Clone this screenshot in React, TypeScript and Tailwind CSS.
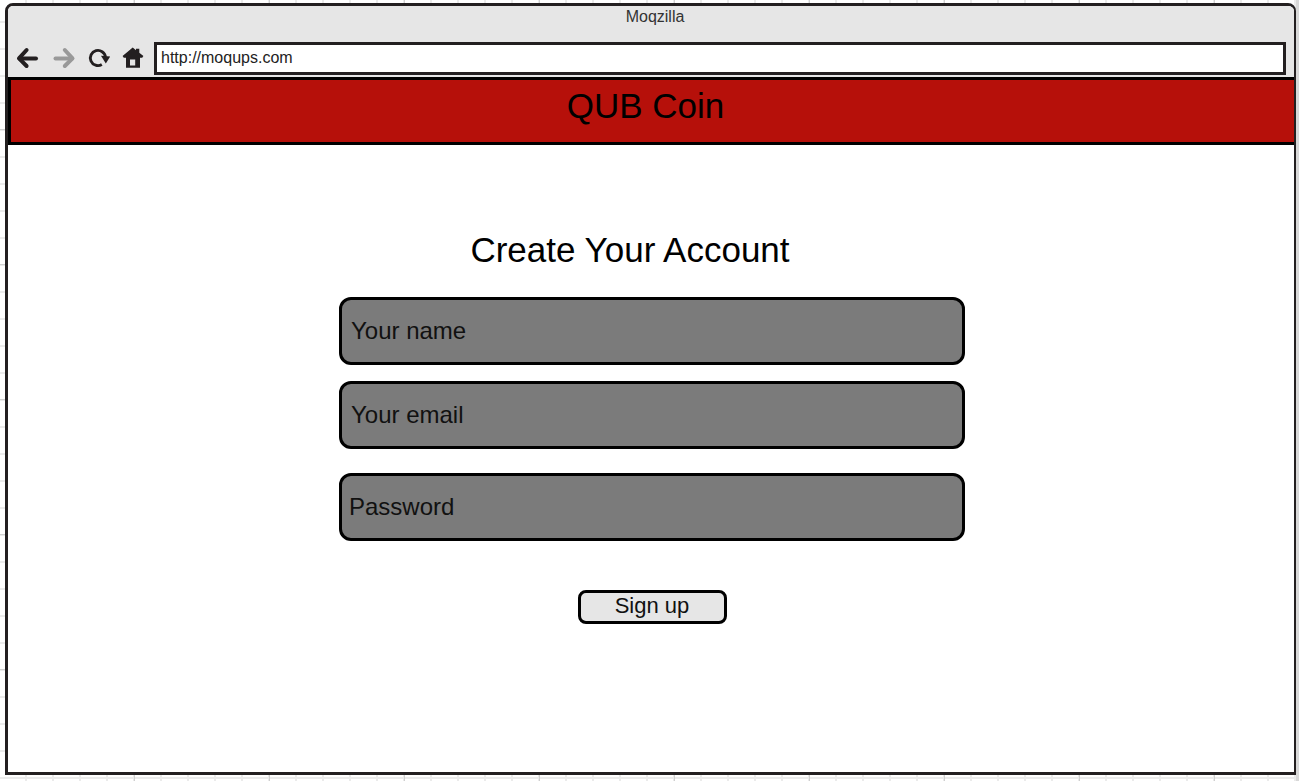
import React from "react";

const INK = "#231f20";

function BackIcon() {
  return (
    <svg viewBox="0 0 28 28" className="block size-7" fill="none" stroke={INK} strokeWidth="4" strokeLinecap="round" strokeLinejoin="round" aria-hidden="true">
      <path d="M12.6 6 L5 14.3 L12.6 22" />
      <path d="M5.5 14.4 H22" />
    </svg>
  );
}

function ForwardIcon() {
  return (
    <svg viewBox="0 0 28 28" className="block size-7" fill="none" stroke="#999999" strokeWidth="4" strokeLinecap="round" strokeLinejoin="round" aria-hidden="true">
      <path d="M15.8 6 L23.5 14.3 L15.8 22" />
      <path d="M6.5 14.4 H23" />
    </svg>
  );
}

function ReloadIcon() {
  return (
    <svg viewBox="0 0 28 28" className="block size-7" aria-hidden="true">
      <path d="M17.8 20.6 A7.6 7.6 0 1 1 21.5 13" fill="none" stroke={INK} strokeWidth="2.9" />
      <path d="M17 11.8 L26.2 12.5 L21.8 19.6 Z" fill={INK} />
    </svg>
  );
}

function HomeIcon() {
  return (
    <svg viewBox="0 0 28 28" className="block size-7" fill={INK} aria-hidden="true">
      <path
        fillRule="evenodd"
        d="M13.7 3.6 L17 6.2 V4.8 H20.3 V8.8 L24.4 12 L23.2 13.7 H21 V23.7 H7 V13.7 H4.8 L3.6 12 Z M11 15.4 V21.6 H16.2 V15.4 Z"
      />
    </svg>
  );
}

const fieldClass =
  "block h-[68px] w-full rounded-xl border-[3px] border-black bg-[#7b7b7b] pr-2 text-2xl text-[#111111] placeholder:text-[#111111] placeholder:opacity-100 outline-none";

export default function App() {
  return (
    <div className="flex min-h-screen flex-col border-r-[3px] border-[#d8d8d8] bg-white bg-[linear-gradient(to_right,#d0d0d0_1px,transparent_1px),linear-gradient(to_bottom,#d0d0d0_1px,transparent_1px),linear-gradient(to_right,#ebebeb_2px,transparent_2px),linear-gradient(to_bottom,#ebebeb_2px,transparent_2px)] bg-[size:135px_135px,135px_135px,27px_27px,27px_27px] bg-[position:134px_0,0_129px,133px_0,0_129px] pt-[3px] pb-[6px] pl-[5px] font-['Liberation_Sans',Arial,sans-serif]">
      <div className="flex flex-1 flex-col overflow-hidden rounded-t-lg border-[3px] border-r-2 border-[#231f20] bg-white">
        <header className="bg-[#e6e6e6] pb-[2px]">
          <p className="pl-2 text-center text-base/[22px] text-[#333333]">Moqzilla</p>
          <nav className="mt-[14px] flex items-start gap-[7px] pr-2 pl-[6px]">
            <div className="flex gap-[7px] pt-[2px]">
              <button type="button" aria-label="Back"><BackIcon /></button>
              <button type="button" aria-label="Forward"><ForwardIcon /></button>
              <button type="button" aria-label="Reload"><ReloadIcon /></button>
              <button type="button" aria-label="Home"><HomeIcon /></button>
            </div>
            <input
              type="text"
              aria-label="Address"
              defaultValue="http://moqups.com"
              className="h-[33px] min-w-0 flex-1 rounded-none border-[3px] border-[#231f20] bg-white pb-[2px] pl-1 text-base text-[#222222] outline-none"
            />
          </nav>
        </header>

        <div className="h-[68px] border-y-[3px] border-l-[3px] border-black bg-[#b6100a] pt-1.5 pr-[14px]">
          <h1 className="text-center text-[35px]/10 text-black">QUB Coin</h1>
        </div>

        <main className="pt-[85px] pr-4 pb-8 pl-[18px]">
          <h2 className="pr-11 text-center text-[35px]/10 text-black">Create Your Account</h2>
          <form className="mx-auto mt-[27px] flex w-full max-w-[626px] flex-col items-center" onSubmit={(e) => e.preventDefault()}>
            <input type="text" aria-label="Your name" placeholder="Your name" className={`${fieldClass} pl-[9px]`} />
            <input type="email" aria-label="Your email" placeholder="Your email" className={`${fieldClass} mt-4 pl-[9px]`} />
            <input type="password" aria-label="Password" placeholder="Password" className={`${fieldClass} mt-6 pl-[7px]`} />
            <button
              type="submit"
              className="mt-[49px] h-[34px] w-[149px] rounded-lg border-[3px] border-black bg-[#e6e6e6] pb-[2px] text-[22px]/6 text-[#111111]"
            >
              Sign up
            </button>
          </form>
        </main>
      </div>
    </div>
  );
}
